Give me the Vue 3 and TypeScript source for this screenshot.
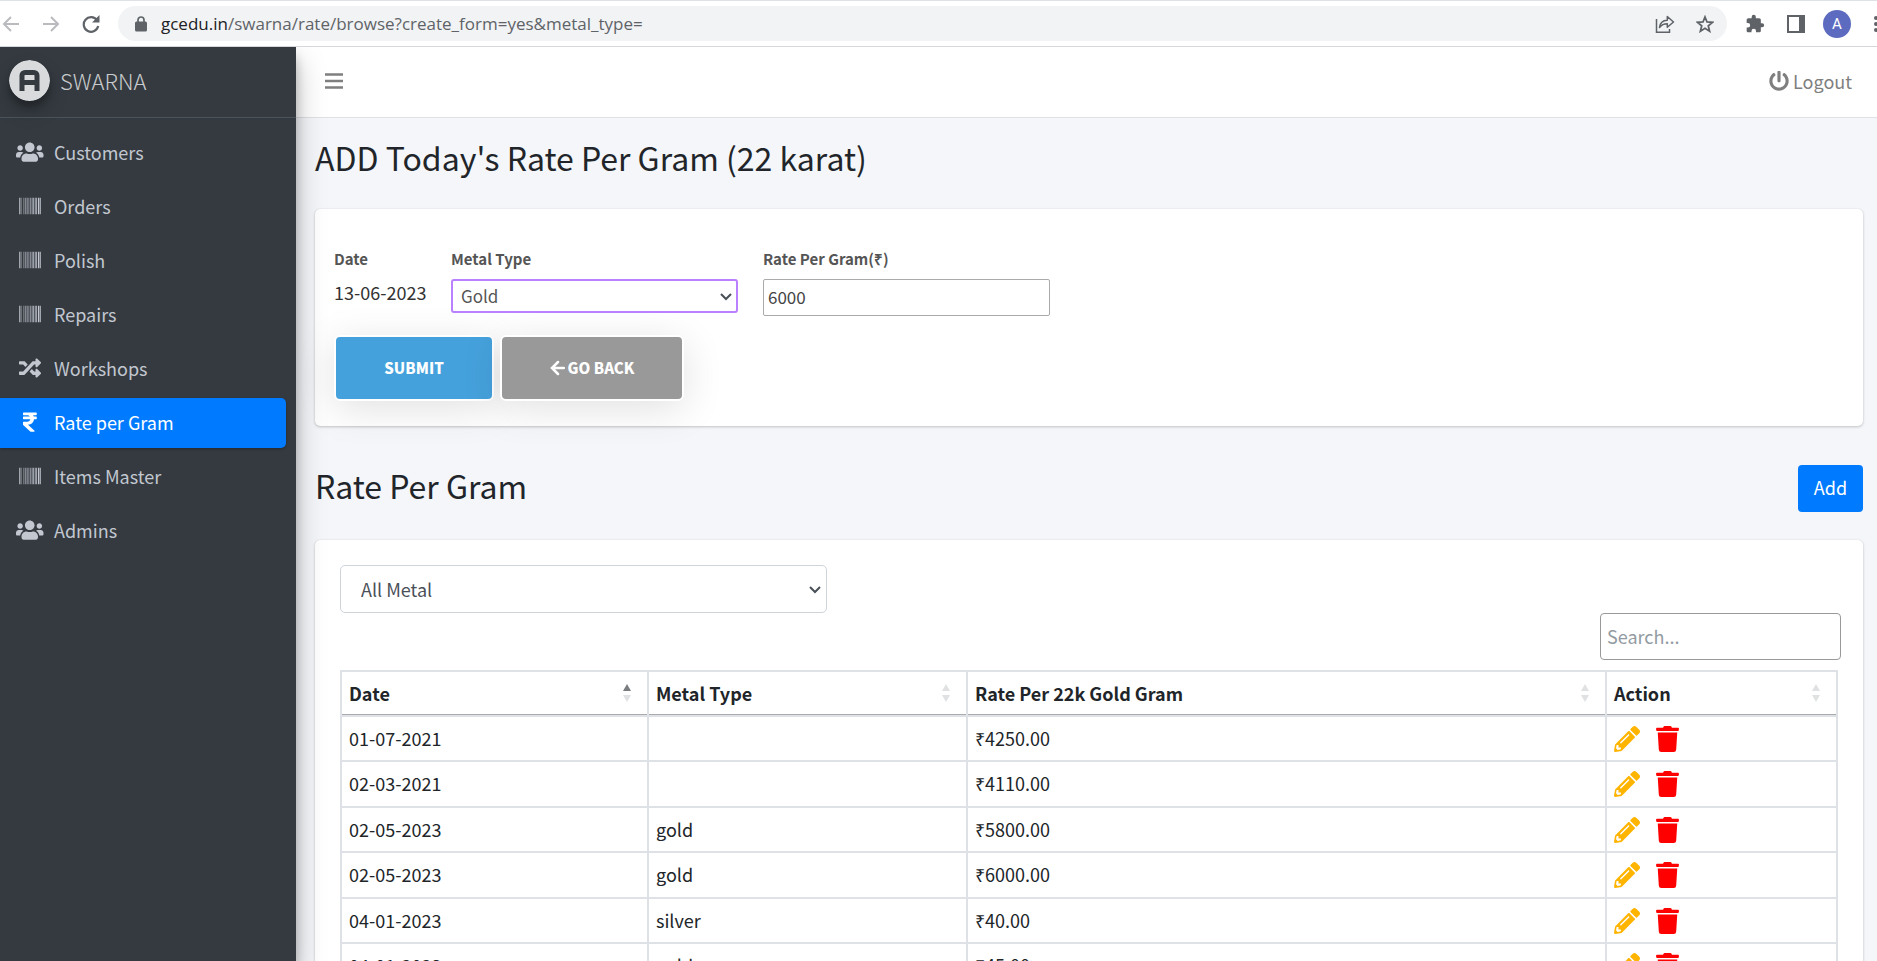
<script setup lang="ts">
import { ref } from 'vue'

type IconName = 'users' | 'barcode' | 'random' | 'rupee'

interface NavItem {
  label: string
  icon: IconName
  active?: boolean
}

interface RateRow {
  date: string
  metal: string
  rate: string
}

const icons: Record<IconName, { box: string; path: string }> = {
  users: {
    box: '0 0 640 512',
    path: 'M96 224c35.3 0 64-28.7 64-64s-28.7-64-64-64-64 28.7-64 64 28.7 64 64 64zm448 0c35.3 0 64-28.7 64-64s-28.7-64-64-64-64 28.7-64 64 28.7 64 64 64zm32 32h-64c-17.6 0-33.5 7.1-45.1 18.6 40.3 22.1 68.9 62 75.1 109.4h66c17.7 0 32-14.3 32-32v-32c0-35.3-28.7-64-64-64zm-256 0c61.9 0 112-50.1 112-112S381.9 32 320 32 208 82.1 208 144s50.1 112 112 112zm76.8 32h-8.3c-20.8 10-43.9 16-68.5 16s-47.6-6-68.5-16h-8.3C179.6 288 128 339.6 128 403.2V432c0 26.5 21.5 48 48 48h288c26.5 0 48-21.5 48-48v-28.8c0-63.6-51.6-115.2-115.2-115.2zm-223.7-13.4C161.5 263.1 145.6 256 128 256H64c-35.3 0-64 28.7-64 64v32c0 17.7 14.3 32 32 32h65.9c6.3-47.4 34.9-87.3 75.2-109.4z',
  },
  barcode: {
    box: '0 0 512 512',
    path: 'M0 448V64h18v384H0zm26.857-.273V64H36v383.727h-9.143zm27.143 0V64h8.857v383.727H54zm44.857 0V64h8.857v383.727h-8.857zm36 0V64h17.714v383.727h-17.714zm44.857 0V64h8.857v383.727h-8.857zm18 0V64h8.857v383.727h-8.857zm18 0V64h8.857v383.727h-8.857zm35.715 0V64h18v383.727h-18zm44.857 0V64h18v383.727h-18zm35.999 0V64h18.001v383.727h-18.001zm36.001 0V64h18.001v383.727h-18.001zm26.857 0V64h18v383.727h-18zm45.143 0V64h26.857v383.727h-26.857zm35.714 0V64h9.143v383.727H476zm18 .273V64h18v384h-18z',
  },
  random: {
    box: '0 0 512 512',
    path: 'M504.971 359.029c9.373 9.373 9.373 24.569 0 33.941l-80 79.984c-15.01 15.01-40.971 4.49-40.971-16.971V416h-58.785a12.004 12.004 0 0 1-8.773-3.812l-70.556-75.596 53.333-57.143L352 336h32v-39.981c0-21.438 25.943-31.998 40.971-16.971l80 79.981zM12 176h84l52.781 56.551 53.333-57.143-70.556-75.596A11.999 11.999 0 0 0 122.785 96H12c-6.627 0-12 5.373-12 12v56c0 6.627 5.373 12 12 12zm372 0v39.984c0 21.46 25.961 31.98 40.971 16.971l80-79.984c9.373-9.373 9.373-24.569 0-33.941l-80-79.981C409.943 24.021 384 34.582 384 56.019V96h-58.785a12.004 12.004 0 0 0-8.773 3.812L96 336H12c-6.627 0-12 5.373-12 12v56c0 6.627 5.373 12 12 12h110.785c3.326 0 6.503-1.381 8.773-3.812L352 176h32z',
  },
  rupee: {
    box: '0 0 320 512',
    path: 'M308 96c6.627 0 12-5.373 12-12V44c0-6.627-5.373-12-12-12H12C5.373 32 0 37.373 0 44v44.748c0 6.627 5.373 12 12 12h85.28c27.308 0 48.261 9.958 60.97 27.252H12c-6.627 0-12 5.373-12 12v40c0 6.627 5.373 12 12 12h158.757c-6.217 36.086-32.961 58.632-74.757 58.632H12c-6.627 0-12 5.373-12 12v53.012c0 3.349 1.4 6.546 3.861 8.818l165.052 152.356a12.001 12.001 0 0 0 8.139 3.182h82.562c10.924 0 16.166-13.408 8.139-20.818L116.871 319.906c76.499-2.34 131.144-53.395 138.318-127.906H308c6.627 0 12-5.373 12-12v-40c0-6.627-5.373-12-12-12h-58.69c-3.486-11.541-8.28-22.246-14.252-32H308z',
  },
}

const pencilPath =
  'M497.9 142.1l-46.1 46.1c-4.7 4.7-12.3 4.7-17 0l-111-111c-4.7-4.7-4.7-12.3 0-17l46.1-46.1c18.7-18.7 49.1-18.7 67.9 0l60.1 60.1c18.8 18.7 18.8 49.1 0 67.9zM284.2 99.8L21.6 362.4.4 483.9c-2.9 16.4 11.4 30.6 27.8 27.8l121.5-21.3 262.6-262.6c4.7-4.7 4.7-12.3 0-17l-111-111c-4.8-4.7-12.4-4.7-17.1 0zM124.1 339.9c-5.5-5.5-5.5-14.3 0-19.8l154-154c5.5-5.5 14.3-5.5 19.8 0s5.5 14.3 0 19.8l-154 154c-5.5 5.5-14.3 5.5-19.8 0zM88 424h48v36.3l-64.5 11.3-31.1-31.1L51.7 376H88v48z'
const trashPath =
  'M432 32H312l-9.4-18.7A24 24 0 0 0 281.1 0H166.8a23.72 23.72 0 0 0-21.4 13.3L136 32H16A16 16 0 0 0 0 48v32a16 16 0 0 0 16 16h416a16 16 0 0 0 16-16V48a16 16 0 0 0-16-16zM53.2 467a48 48 0 0 0 47.9 45h245.8a48 48 0 0 0 47.9-45L416 128H32z'

const navItems: NavItem[] = [
  { label: 'Customers', icon: 'users' },
  { label: 'Orders', icon: 'barcode' },
  { label: 'Polish', icon: 'barcode' },
  { label: 'Repairs', icon: 'barcode' },
  { label: 'Workshops', icon: 'random' },
  { label: 'Rate per Gram', icon: 'rupee', active: true },
  { label: 'Items Master', icon: 'barcode' },
  { label: 'Admins', icon: 'users' },
]

const columns = ['Date', 'Metal Type', 'Rate Per 22k Gold Gram', 'Action']

const rows: RateRow[] = [
  { date: '01-07-2021', metal: '', rate: '₹4250.00' },
  { date: '02-03-2021', metal: '', rate: '₹4110.00' },
  { date: '02-05-2023', metal: 'gold', rate: '₹5800.00' },
  { date: '02-05-2023', metal: 'gold', rate: '₹6000.00' },
  { date: '04-01-2023', metal: 'silver', rate: '₹40.00' },
  { date: '04-01-2023', metal: 'gold', rate: '₹45.00' },
]

const metalType = ref('Gold')
const rate = ref('6000')
const metalFilter = ref('All Metal')
const search = ref('')
</script>

<template>
  <div class="window">
    <header class="browser-bar">
      <button class="tool" type="button" aria-label="Back">
        <svg width="18" height="18" viewBox="0 0 18 18" fill="none" stroke="#b9bbbe" stroke-width="2"><path d="M17 9H2M9 2L2 9l7 7" /></svg>
      </button>
      <button class="tool" type="button" aria-label="Forward">
        <svg width="18" height="18" viewBox="0 0 18 18" fill="none" stroke="#b9bbbe" stroke-width="2"><path d="M1 9h15M9 2l7 7-7 7" /></svg>
      </button>
      <button class="tool" type="button" aria-label="Reload">
        <svg width="18" height="18" viewBox="0 0 18 18"><path d="M15 5.200A7.300 7.300 0 1 0 16.200 11" fill="none" stroke="#5f6368" stroke-width="2.200" /><path d="M17.500 0v7.500H10z" fill="#5f6368" /></svg>
      </button>
      <div class="address">
        <svg width="12" height="16" viewBox="0 0 12 16"><path d="M1.500 5.500h9A1.500 1.500 0 0 1 12 7v7a1.500 1.500 0 0 1-1.500 1.500h-9A1.500 1.500 0 0 1 0 14V7a1.500 1.500 0 0 1 1.500-1.500z" fill="#5f6368" /><path d="M3 6V4a3 3 0 0 1 6 0v2" fill="none" stroke="#5f6368" stroke-width="1.700" /></svg>
        <span class="url"><b>gcedu.in</b>/swarna/rate/browse?create_form=yes&amp;metal_type=</span>
        <button class="tool share" type="button" aria-label="Share">
          <svg width="20" height="20" viewBox="0 0 20 20" fill="none" stroke="#5f6368" stroke-width="1.500"><path d="M1.500 5v13.200h13V15" /><path d="M4.500 13.500c.5-4.700 3.200-7 7.800-7.200V2.500L18.500 8l-6.200 5.300V9.800c-3.400 0-5.800 1-7.800 3.700z" stroke-linejoin="round" /></svg>
        </button>
        <button class="tool" type="button" aria-label="Bookmark">
          <svg width="18" height="18" viewBox="0 0 18 18" fill="none" stroke="#5f6368" stroke-width="1.800"><path d="M9 2l2 5 5.400.4-4.100 3.500 1.300 5.300L9 13.300l-4.600 2.900 1.300-5.300L1.600 7.400 7 7z" /></svg>
        </button>
      </div>
      <button class="tool puzzle" type="button" aria-label="Extensions">
        <svg width="20" height="20" viewBox="0 0 24 24" fill="#5f6368"><path d="M20.500 11H19V7c0-1.100-.9-2-2-2h-4V3.500a2.500 2.500 0 0 0-5 0V5H4c-1.100 0-2 .9-2 2v3.800h1.500a2.700 2.700 0 0 1 0 5.400H2V20c0 1.100.9 2 2 2h3.800v-1.500a2.700 2.700 0 0 1 5.400 0V22H17c1.100 0 2-.9 2-2v-4h1.500a2.500 2.500 0 0 0 0-5z" /></svg>
      </button>
      <button class="tool" type="button" aria-label="Side panel">
        <svg width="18" height="18" viewBox="0 0 18 18"><path d="M1 1h16v16H1z" fill="none" stroke="#5f6368" stroke-width="2" /><path d="M12 1h5v16h-5z" fill="#5f6368" /></svg>
      </button>
      <button class="avatar" type="button" aria-label="Profile">A</button>
      <button class="tool more" type="button" aria-label="More">
        <svg width="6" height="18" viewBox="0 0 6 18" fill="#5f6368"><circle cx="3" cy="3" r="2" /><circle cx="3" cy="9" r="2" /><circle cx="3" cy="15" r="2" /></svg>
      </button>
    </header>

    <div class="app">
      <aside class="sidebar">
        <a class="brand" href="#">
          <svg class="logo" width="41" height="41" viewBox="0 0 41 41">
            <circle cx="20.500" cy="20.500" r="20.500" fill="#d9dadc" />
            <path d="M13 31V15.500a3 3 0 0 1 3-3h9a3 3 0 0 1 3 3V31M13 22.500h15" fill="none" stroke="#343a40" stroke-width="5" />
          </svg>
          <span class="brand-name">SWARNA</span>
        </a>
        <nav class="menu">
          <a v-for="item in navItems" :key="item.label" href="#" class="menu-item" :class="{ active: item.active }">
            <span class="menu-icon">
              <svg height="22" :viewBox="icons[item.icon].box"><path :d="icons[item.icon].path" fill="currentColor" /></svg>
            </span>
            {{ item.label }}
          </a>
        </nav>
      </aside>

      <div class="main">
        <div class="topbar">
          <button class="tool" type="button" aria-label="Toggle menu">
            <svg width="18" height="16" viewBox="0 0 18 16" fill="none" stroke="#7f7f7f" stroke-width="2.500"><path d="M0 1.500h18M0 8h18M0 14.500h18" /></svg>
          </button>
          <a class="logout" href="#">
            <svg width="20" height="20" viewBox="0 0 512 512"><path fill="currentColor" d="M400 54.100c63 45 104 118.600 104 201.900 0 136.800-110.800 247.700-247.500 248C120 504.300 8.200 393 8 256.400 7.900 173.100 48.900 99.300 111.800 54.200c11.700-8.300 28-4.800 35 7.700L162.600 90c5.900 10.500 3.100 23.800-6.600 31-41.500 30.800-68 79.600-68 134.900-.1 92.300 74.500 168.100 168 168.100 91.600 0 168.600-74.200 168-169.100-.3-51.800-24.700-101.800-68.100-134-9.700-7.200-12.400-20.500-6.500-30.900l15.800-28.100c7-12.400 23.200-16.100 34.800-7.800zM296 264V24c0-13.300-10.700-24-24-24h-32c-13.300 0-24 10.700-24 24v240c0 13.300 10.700 24 24 24h32c13.300 0 24-10.700 24-24z" /></svg>
            Logout
          </a>
        </div>

        <main class="content">
          <div class="title-row">
            <h1>ADD Today's Rate Per Gram (22 karat)</h1>
          </div>

          <form class="card rate-form" @submit.prevent>
            <div class="fields">
              <div class="field date-field">
                <span class="label">Date</span>
                <span class="date">13-06-2023</span>
              </div>
              <div class="field">
                <label class="label" for="metal-type">Metal Type</label>
                <div class="select-box">
                  <select id="metal-type" v-model="metalType" class="metal-select">
                    <option>Gold</option>
                    <option>Silver</option>
                  </select>
                  <svg class="chevron" width="12" height="8" viewBox="0 0 12 8"><path d="M1 1l5 5 5-5" /></svg>
                </div>
              </div>
              <div class="field">
                <label class="label" for="rate">Rate Per Gram(₹)</label>
                <input id="rate" v-model="rate" class="rate-input" type="text" />
              </div>
            </div>
            <div class="actions">
              <button class="big-button submit" type="submit">SUBMIT</button>
              <button class="big-button back" type="button">
                <svg width="15" height="16" viewBox="0 0 15 16" fill="none" stroke="#fff" stroke-width="2.500" stroke-linecap="round"><path d="M14 8H2M8 2L2 8l6 6" /></svg>
                GO BACK
              </button>
            </div>
          </form>

          <div class="title-row second">
            <h2>Rate Per Gram</h2>
            <button class="add" type="button">Add</button>
          </div>

          <section class="card list">
            <div class="select-box filter">
              <select v-model="metalFilter" class="filter-select" aria-label="Metal filter">
                <option>All Metal</option>
                <option>Gold</option>
                <option>Silver</option>
              </select>
              <svg class="chevron" width="12" height="8" viewBox="0 0 12 8"><path d="M1 1l5 5 5-5" /></svg>
            </div>
            <input v-model="search" class="search" type="search" placeholder="Search..." aria-label="Search" />
            <table>
              <colgroup>
                <col class="c-date" />
                <col class="c-metal" />
                <col class="c-rate" />
                <col />
              </colgroup>
              <thead>
                <tr>
                  <th v-for="(column, i) in columns" :key="column" scope="col">
                    <div class="head">
                      {{ column }}
                      <svg width="8" height="18" viewBox="0 0 8 18"><path d="M0 7l4-7 4 7z" :fill="i === 0 ? '#7a7d80' : '#e0e1e2'" /><path d="M0 11l4 7 4-7z" fill="#e0e1e2" /></svg>
                    </div>
                  </th>
                </tr>
              </thead>
              <tbody>
                <tr v-for="(row, i) in rows" :key="i">
                  <td>{{ row.date }}</td>
                  <td>{{ row.metal }}</td>
                  <td>{{ row.rate }}</td>
                  <td class="action-cell">
                    <div class="row-actions">
                      <button class="tool edit" type="button" aria-label="Edit">
                        <svg width="26" height="26" viewBox="0 0 512 512"><path :d="pencilPath" fill="currentColor" /></svg>
                      </button>
                      <button class="tool delete" type="button" aria-label="Delete">
                        <svg width="23" height="26" viewBox="0 0 448 512"><path :d="trashPath" fill="currentColor" /></svg>
                      </button>
                    </div>
                  </td>
                </tr>
              </tbody>
            </table>
          </section>
        </main>
      </div>
    </div>
  </div>
</template>

<style>
body {
  margin: 0;
}
</style>

<style scoped>
.window,
.window * {
  box-sizing: border-box;
}

.window {
  display: flex;
  flex-direction: column;
  height: 100vh;
  overflow: hidden;
  font-family: 'Noto Sans CJK SC', 'Open Sans', sans-serif;
  font-size: 18px;
  line-height: 26px;
  color: #212529;
}

svg {
  display: block;
  flex: none;
}

button,
input,
select {
  font: inherit;
  color: inherit;
  margin: 0;
}

a {
  text-decoration: none;
}

.tool {
  display: flex;
  padding: 0;
  border: 0;
  background: none;
}

/* Browser toolbar */
.browser-bar {
  display: flex;
  align-items: center;
  flex: none;
  gap: 22px;
  height: 47px;
  padding-left: 2px;
  border-top: 1px solid #dee1e6;
  border-bottom: 1px solid #d5d7da;
  background: #fff;
  overflow: hidden;
}

.address {
  display: flex;
  align-items: center;
  flex: 1;
  height: 35px;
  margin-left: -4px;
  padding: 0 13px 0 17px;
  border-radius: 18px;
  background: #f1f3f4;
}

.url {
  flex: 1;
  margin-left: 14px;
  font-family: 'Open Sans', sans-serif;
  font-size: 17px;
  color: #5f6368;
}

.url b {
  font-weight: 400;
  color: #202124;
}

.share {
  margin-right: 21px;
}

.puzzle {
  margin-left: -4px;
}

.avatar {
  flex: none;
  width: 28px;
  height: 28px;
  margin-left: -4px;
  padding: 0;
  border: 0;
  border-radius: 50%;
  background: #5c6bc0;
  color: #fff;
  font-family: Roboto, sans-serif;
  font-size: 15px;
}

.more {
  margin-right: -2px;
}

/* Sidebar */
.app {
  display: flex;
  flex: 1;
  min-height: 0;
}

.sidebar {
  position: relative;
  z-index: 1;
  flex: none;
  width: 296px;
  background: #343a40;
  box-shadow: 0 14px 28px rgba(0, 0, 0, 0.25), 0 10px 10px rgba(0, 0, 0, 0.22);
  clip-path: inset(0 -60px 0 0);
}

.brand {
  display: flex;
  align-items: center;
  gap: 10px;
  height: 71px;
  padding: 0 9px 3px;
  border-bottom: 1px solid #4b545c;
  font-size: 22px;
  color: #c9cbcd;
}

.brand-name {
  padding-bottom: 2px;
  font-weight: 300;
}

.logo {
  border-radius: 50%;
  box-shadow: 0 10px 20px rgba(0, 0, 0, 0.19), 0 6px 6px rgba(0, 0, 0, 0.23);
}

.menu {
  display: flex;
  flex-direction: column;
  gap: 4px;
  padding: 10px 10px 0 0;
}

.menu-item {
  display: flex;
  align-items: center;
  gap: 8px;
  height: 50px;
  padding: 0 0 2px 14px;
  border-radius: 0 5px 5px 0;
  color: #c2c7d0;
}

.menu-icon {
  display: flex;
  justify-content: center;
  width: 32px;
}

.menu-item.active {
  background: #007bff;
  color: #fff;
  box-shadow: 0 1px 3px rgba(0, 0, 0, 0.3);
}

/* Main column */
.main {
  display: flex;
  flex-direction: column;
  flex: 1;
  min-width: 0;
  background: #f4f6f9;
}

.topbar {
  display: flex;
  align-items: center;
  justify-content: space-between;
  flex: none;
  height: 71px;
  padding: 0 25px 2px 29px;
  border-bottom: 1px solid #dee2e6;
  background: #fff;
}

.logout {
  display: flex;
  align-items: center;
  gap: 4px;
  color: #7f7f7f;
}

.content {
  padding: 0 14px 0 19px;
}

.title-row {
  display: flex;
  align-items: center;
  justify-content: space-between;
  height: 91px;
  padding-bottom: 14px;
}

.title-row.second {
  height: 114px;
  padding: 10px 0 0;
}

h1,
h2 {
  margin: 0;
  font-size: 32px;
  line-height: 40px;
  font-weight: 400;
}

h2 {
  padding-bottom: 6px;
}

.add {
  width: 65px;
  height: 47px;
  padding: 0 0 2px;
  border: 0;
  border-radius: 4px;
  background: #007bff;
  color: #fff;
}

.card {
  border-radius: 5px;
  background: #fff;
  box-shadow: 0 0 1px rgba(0, 0, 0, 0.13), 0 1px 3px rgba(0, 0, 0, 0.2);
}

/* Rate form */
.rate-form {
  padding: 38px 19px 25px;
}

.fields {
  display: flex;
  gap: 25px;
  height: 88px;
}

.field {
  display: flex;
  flex-direction: column;
  gap: 8px;
  width: 287px;
}

.date-field {
  width: 92px;
}

.label {
  font-size: 15px;
  line-height: 24px;
  font-weight: 700;
  color: #555;
}

.date {
  color: #333;
  white-space: nowrap;
}

.select-box {
  position: relative;
}

.select-box select {
  display: block;
  width: 100%;
  appearance: none;
  background: #fff;
}

.chevron {
  position: absolute;
  right: 6px;
  top: calc(50% - 3px);
  fill: none;
  stroke: #495057;
  stroke-width: 2px;
  pointer-events: none;
}

.select-box .metal-select {
  height: 34px;
  padding: 0 8px;
  border: 2px solid #b980ff;
  border-radius: 3px;
  color: #555;
  font-size: 17px;
}

.rate-input {
  height: 37px;
  padding: 0 4px 2px;
  border: 1px solid #aaa;
  border-radius: 2px;
  color: #444;
  font-size: 17px;
}

.actions {
  display: flex;
  gap: 6px;
}

.big-button {
  display: flex;
  align-items: center;
  justify-content: center;
  gap: 3px;
  width: 160px;
  height: 66px;
  padding: 0;
  border: 2px solid #fff;
  border-radius: 6px;
  color: #fff;
  font-size: 15px;
  font-weight: 900;
  box-shadow: 0 8px 40px rgba(0, 0, 0, 0.12);
}

.submit {
  background: #45a1dc;
}

.back {
  width: 184px;
  background: #999;
}

/* Rates list */
.list {
  padding: 25px 22px 30px 25px;
}

.filter {
  width: 487px;
}

.select-box .filter-select {
  height: 48px;
  padding: 0 20px;
  border: 1px solid #ced4da;
  border-radius: 5px;
  color: #495057;
}

.search {
  display: block;
  width: 241px;
  height: 47px;
  margin: 0 0 10px auto;
  padding: 0 6px 2px;
  border: 1px solid #999;
  border-radius: 4px;
}

.search::placeholder {
  color: #939ba2;
  opacity: 1;
}

table {
  width: calc(100% - 3px);
  table-layout: fixed;
  border-collapse: collapse;
}

.c-date {
  width: 307px;
}

.c-metal {
  width: 319px;
}

.c-rate {
  width: 639px;
}

th,
td {
  height: 46px;
  padding: 0 7px 2px;
  border: 2px solid #dee2e6;
  text-align: left;
}

tbody tr:nth-child(odd) td {
  height: 45px;
}

th {
  height: 45px;
  font-weight: 700;
  box-shadow: inset 0 -1px #a9abae;
}

.head {
  display: flex;
  align-items: center;
  justify-content: space-between;
  padding-right: 9px;
}

td.action-cell {
  padding-bottom: 0;
}

.row-actions {
  display: flex;
  gap: 16px;
}

.edit {
  color: #ffb400;
}

.delete {
  color: #f00;
}
</style>
